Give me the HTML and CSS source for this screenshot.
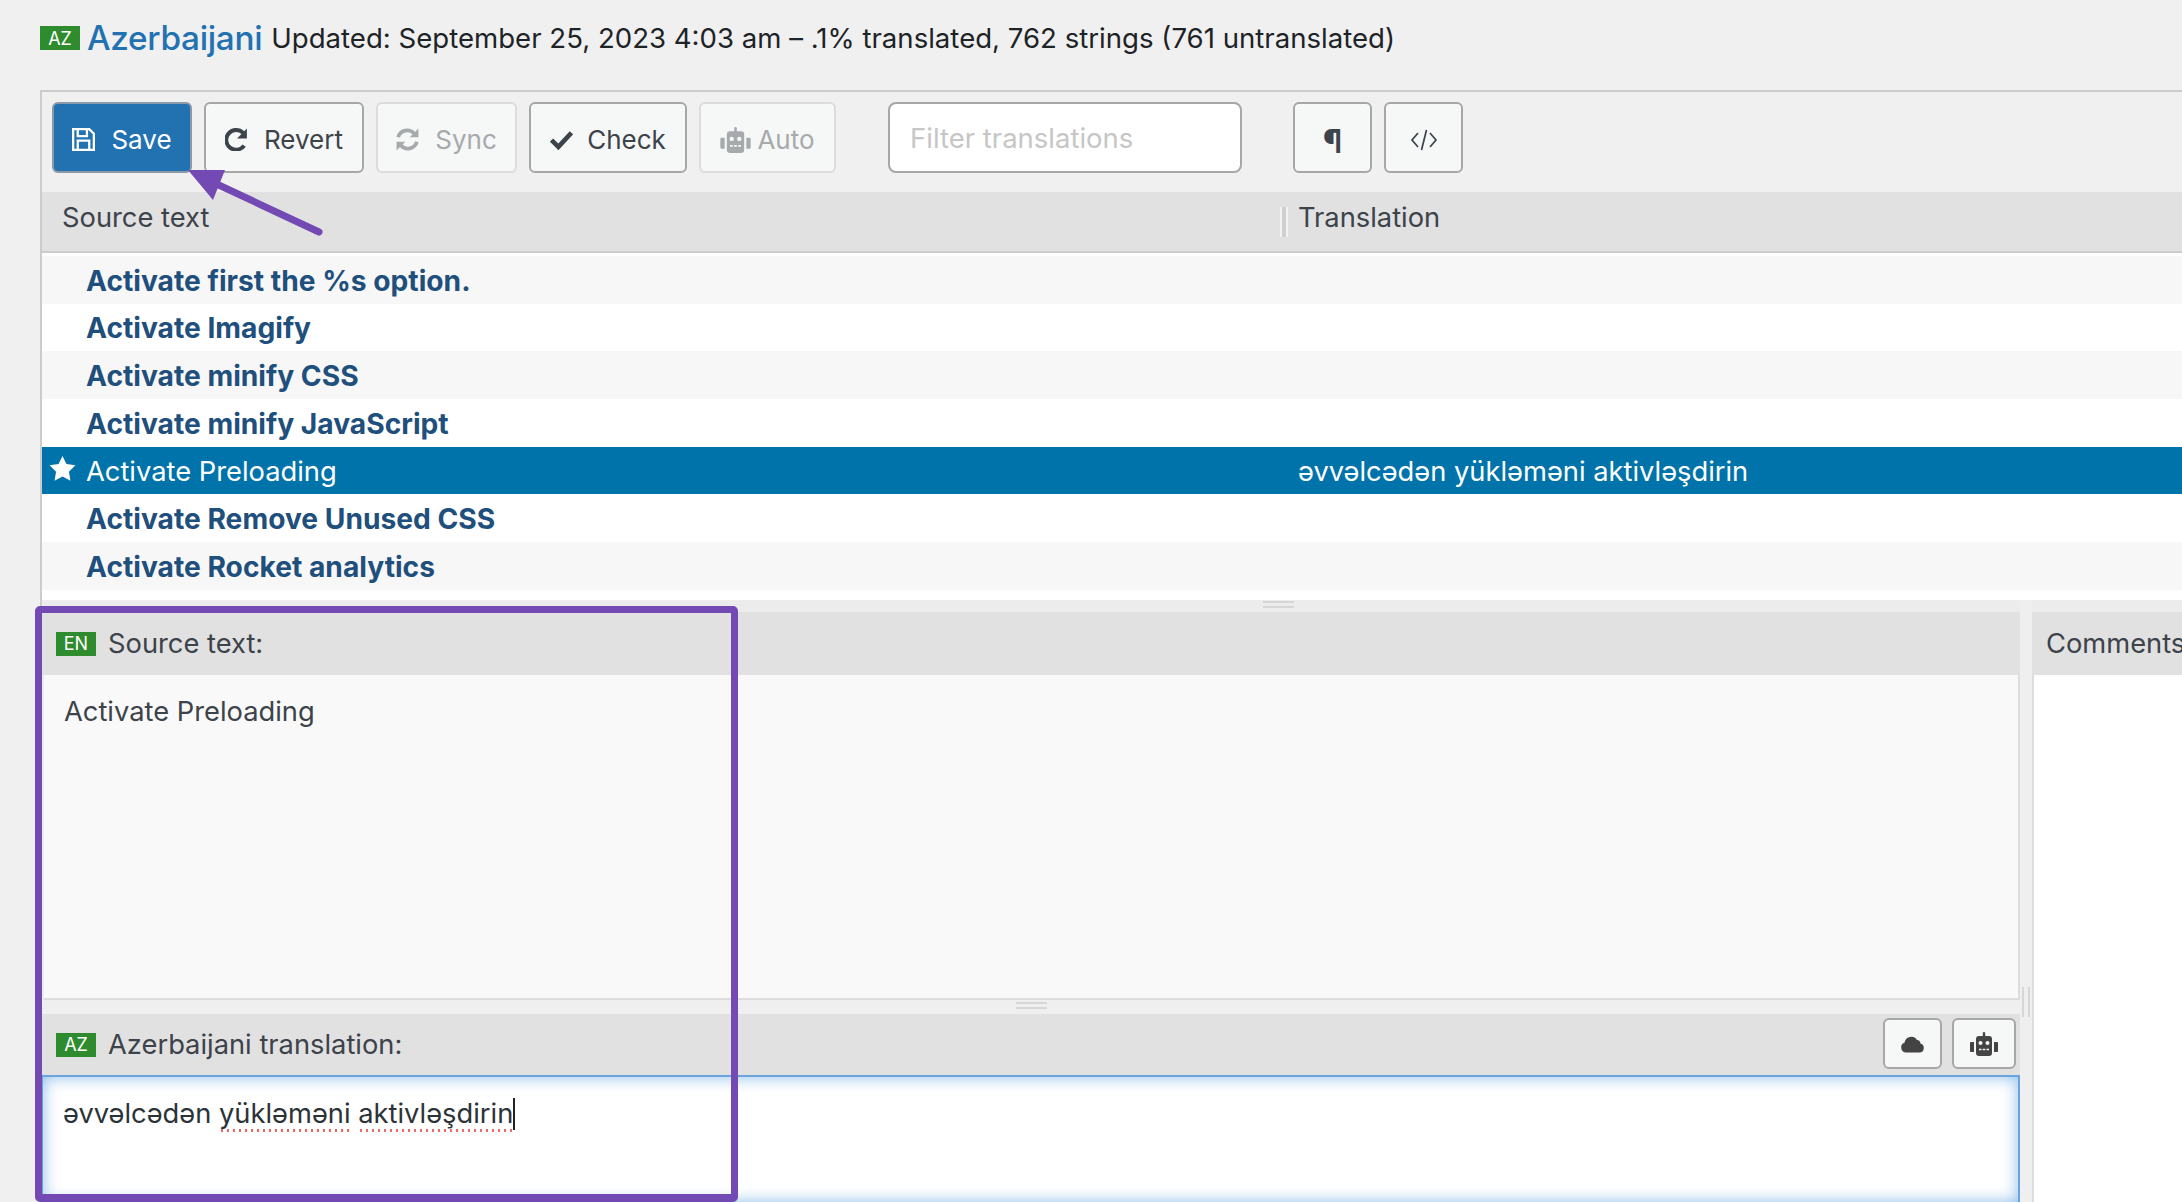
FILE: index.html
```html
<!DOCTYPE html>
<html lang="en">
<head>
<meta charset="utf-8">
<title>Azerbaijani translation</title>
<link rel="stylesheet" href="styles.css">
</head>
<body>
<div class="page">
  <header class="title">
    <span class="badge badge-title">AZ</span>
    <a class="lang">Azerbaijani</a>
    <span class="meta">Updated: September 25, 2023 4:03 am – .1% translated, 762 strings (761 untranslated)</span>
  </header>
  <section class="panel">
    <div class="toolbar">
      <button class="btn btn-primary btn-save">
        <svg class="ico" viewBox="2 2 20 20"><path d="M3 3h14l4 4v14H3z M7 3v6h8V3 M7 21v-8h10v8" fill="none" stroke="#fff" stroke-width="2"/></svg>Save
      </button>
      <button class="btn btn-revert">
        <svg class="ico" viewBox="2 1.500 20 21"><path d="M19 17.500A9 9 0 1 1 18 6" fill="none" stroke="#3c434a" stroke-width="3.600"/><path d="M21.500 2v9h-9z" fill="#3c434a"/></svg>Revert
      </button>
      <button class="btn btn-off btn-sync">
        <svg class="ico" viewBox="1.500 1.500 21 21"><path d="M3.500 10A8.500 8.500 0 0 1 18 6.500" fill="none" stroke="#a7aaad" stroke-width="3.400"/><path d="M22 2v8h-8z" fill="#a7aaad"/><path d="M20.500 14A8.500 8.500 0 0 1 6 17.500" fill="none" stroke="#a7aaad" stroke-width="3.400"/><path d="M2 22v-8h8z" fill="#a7aaad"/></svg>Sync
      </button>
      <button class="btn btn-check">
        <svg class="ico" viewBox="1 3 22 19"><path d="M2.500 13l6.500 6.500L21.500 6" fill="none" stroke="#3c434a" stroke-width="4.400"/></svg>Check
      </button>
      <button class="btn btn-off btn-auto">
        <svg class="ico-robot" viewBox="0 0 28 24"><path d="M14 0a1.200 1.200 0 0 1 1.200 1.200V4H19a3 3 0 0 1 3 3v14a3 3 0 0 1-3 3H9a3 3 0 0 1-3-3V7a3 3 0 0 1 3-3h3.800V1.200A1.200 1.200 0 0 1 14 0zM1 10h3v10H1a1 1 0 0 1-1-1v-8a1 1 0 0 1 1-1zm23 0h3a1 1 0 0 1 1 1v8a1 1 0 0 1-1 1h-3z" fill="#a7aaad"/><circle cx="10.500" cy="11" r="2" fill="#f6f7f7"/><circle cx="17.500" cy="11" r="2" fill="#f6f7f7"/><path d="M9 17.500h10" stroke="#f6f7f7" stroke-width="1.600" stroke-dasharray="2.500 1.250"/></svg>Auto
      </button>
      <div class="filter">Filter translations</div>
      <button class="btn btn-icon btn-para">¶</button>
      <button class="btn btn-icon btn-code">
        <svg class="ico-code" viewBox="0 0 28 24"><path d="M8 5L2 12l6 7M20 5l6 7-6 7M16.500 2l-5 20" fill="none" stroke="#3c434a" stroke-width="1.700"/></svg>
      </button>
    </div>
    <div class="thead">
      <div class="th th-source">Source text</div>
      <div class="th th-target"><span class="grip-v"></span>Translation</div>
    </div>
    <div class="list">
      <div class="row alt"><span class="cell-src">Activate first the %s option.</span></div>
      <div class="row"><span class="cell-src">Activate Imagify</span></div>
      <div class="row alt"><span class="cell-src">Activate minify CSS</span></div>
      <div class="row"><span class="cell-src">Activate minify JavaScript</span></div>
      <div class="row selected">
        <svg class="star" viewBox="0 0 24 24"><path d="M12 .8l3.500 7.300 8 1.100-5.800 5.600 1.400 8L12 19l-7.100 3.800 1.400-8L.500 9.200l8-1.100z" fill="#fff"/></svg>
        <span class="cell-src">Activate Preloading</span>
        <span class="cell-tgt">əvvəlcədən yükləməni aktivləşdirin</span>
      </div>
      <div class="row"><span class="cell-src">Activate Remove Unused CSS</span></div>
      <div class="row alt"><span class="cell-src">Activate Rocket analytics</span></div>
      <span class="grip-h grip-list"></span>
    </div>
    <div class="editor">
      <div class="editor-main">
        <div class="pane-head">
          <span class="badge">EN</span>Source text:
        </div>
        <div class="source-body">Activate Preloading</div>
        <div class="split-h"><span class="grip-h"></span></div>
        <div class="pane-head pane-head-target">
          <span class="badge">AZ</span>Azerbaijani translation:
          <div class="pane-actions">
            <button class="btn btn-small btn-cloud">
              <svg class="ico-cloud" viewBox="0 0 24 18"><path d="M5.500 17.500A5 5 0 0 1 4 7.800 6.800 6.800 0 0 1 16.500 5a4 4 0 0 1 3.500 3.500 4.600 4.600 0 0 1-1 9z" fill="#444"/></svg>
            </button>
            <button class="btn btn-small btn-robot">
              <svg class="ico-bot" viewBox="0 0 28 24"><path d="M14 0a1.200 1.200 0 0 1 1.200 1.200V4H19a3 3 0 0 1 3 3v14a3 3 0 0 1-3 3H9a3 3 0 0 1-3-3V7a3 3 0 0 1 3-3h3.800V1.200A1.200 1.200 0 0 1 14 0zM1 10h3v10H1a1 1 0 0 1-1-1v-8a1 1 0 0 1 1-1zm23 0h3a1 1 0 0 1 1 1v8a1 1 0 0 1-1 1h-3z" fill="#444"/><circle cx="10.500" cy="11" r="2" fill="#f6f7f7"/><circle cx="17.500" cy="11" r="2" fill="#f6f7f7"/><path d="M9 17.500h10" stroke="#f6f7f7" stroke-width="1.600" stroke-dasharray="2.500 1.250"/></svg>
            </button>
          </div>
        </div>
        <div class="target-body">əvvəlcədən <span class="misspelt">yükləməni</span> <span class="misspelt">aktivləşdirin</span><span class="caret"></span></div>
      </div>
      <div class="split-v"><span class="grip-vt"></span></div>
      <div class="editor-side">
        <div class="pane-head pane-head-side">Comments</div>
        <div class="side-body"></div>
      </div>
    </div>
  </section>
  <div class="frame"></div>
  <svg class="arrow" viewBox="0 0 160 80"><path d="M20 10L131 62" stroke="#7349b3" stroke-width="7" stroke-linecap="round"/><path d="M0 0h37L25 30z" fill="#7349b3"/></svg>
</div>
</body>
</html>
```
FILE: styles.css
```css
* { box-sizing: border-box; }
html, body { margin: 0; height: 100%; }
body {
  background: #f0f0f0;
  color: #3c434a;
  font-family: Inter, "Noto Sans", "Liberation Sans", sans-serif;
  font-size: 27.3px;
  overflow: hidden;
}
.page { position: relative; height: 1202px; padding-left: 40px; overflow: hidden; }
.title { height: 76px; margin-bottom: 14px; display: flex; align-items: center; }
.badge {
  display: inline-flex; align-items: center; justify-content: center;
  width: 40px; height: 24px; background: #2e8b2e; color: #fff;
  font-size: 18px; margin-right: 13px; flex: none;
}
.badge-title { margin-right: 7px; }
.lang { color: #2271b1; font-size: 33.3px; font-weight: 500; margin-right: 9px; letter-spacing: -.3px; }
.meta { color: #1d2327; font-size: 27.6px; }

.panel { border-top: 2px solid #ccc; border-left: 2px solid #ccc; }
.toolbar { height: 100px; padding: 10px; display: flex; align-items: flex-start; gap: 12px; }
.btn {
  height: 71px; padding: 4px 0 0; border: 2px solid #a7a7a7; border-radius: 6px;
  background: #f6f7f7; color: #3c434a; font: inherit; font-size: 26px;
  display: inline-flex; align-items: center; justify-content: center; gap: 16px; flex: none;
}
.btn-primary { background: #2271b1; color: #fff; border-color: #8a9aa8; }
.btn-off { border-color: #dcdcde; color: #a7aaad; }
.btn-save { width: 140px; }
.btn-revert { width: 160px; }
.btn-sync { width: 141px; }
.btn-check { width: 158px; gap: 14px; }
.btn-auto { width: 137px; gap: 6px; }
.ico { width: 23px; height: 23px; flex: none; }
.ico-robot { width: 31px; height: 26px; flex: none; }
.filter {
  width: 354px; height: 71px; margin-left: 40px; padding: 0 20px;
  background: #fff; border: 2px solid #a7a7a7; border-radius: 8px;
  color: #c6c6c6; font-size: 27.5px; display: flex; align-items: center;
}
.btn-icon { width: 79px; }
.btn-para { margin-left: 39px; padding-top: 7px; font-size: 32px; font-weight: 700; }
.ico-code { width: 28px; height: 24px; }

.thead { height: 61px; background: #e1e1e1; border-bottom: 2px solid #ccc; display: flex; }
.th { padding: 0 0 8px 20px; display: flex; align-items: center; position: relative; }
.th-source { width: 1238px; }
.th-target { padding-left: 18px; flex: 1; }
.grip-v {
  position: absolute; left: 0; top: 15px; width: 8px; height: 30px;
  border-left: 2px solid #f2f2f2; border-right: 2px solid #f2f2f2; background: #cfcfcf;
}
.list { height: 347px; padding-top: 3px; background: #fff; position: relative; }
.row { height: 47.67px; padding-top: 2px; display: flex; align-items: center; position: relative; background: #fff; }
.row.alt { background: #f7f7f7; }
.cell-src { margin-left: 44px; width: 1212px; flex: none; color: #1f4f7c; font-weight: 700; font-size: 28.2px; }
.row.selected { background: #0073aa; color: #fff; }
.selected .cell-src, .selected .cell-tgt { color: #fff; font-weight: 400; font-size: 27.3px; }
.star { position: absolute; left: 7px; top: 8px; width: 27px; height: 27px; }
.grip-h {
  display: block; width: 31px; height: 7px;
  border-top: 2px solid #d6d6d6; border-bottom: 2px solid #d6d6d6;
}
.grip-list { position: absolute; left: 1221px; bottom: -8px; }

.editor { height: 602px; background: #ececec; padding-top: 12px; display: flex; }
.editor-main { width: 1978px; flex: none; display: flex; flex-direction: column; }
.pane-head {
  height: 63px; background: #e1e1e1; display: flex; align-items: center;
  padding-left: 14px; position: relative; flex: none;
}
.pane-head .badge { margin-right: 12px; }
.source-body {
  height: 325px; margin-left: 2px; background: #f9f9f9; border-right: 2px solid #ddd;
  border-bottom: 2px solid #ddd; padding: 19px 20px; line-height: 36px; flex: none;
}
.split-h { height: 14px; background: #efefef; position: relative; flex: none; }
.split-h .grip-h { position: absolute; left: 974px; top: 2px; }
.pane-head-target { height: 61px; }
.pane-actions { position: absolute; right: 4px; top: 4px; display: flex; gap: 10px; }
.btn-small { height: 51px; padding: 0; }
.btn-cloud { width: 59px; }
.btn-robot { width: 64px; }
.ico-cloud { width: 25px; height: 18px; }
.ico-bot { width: 28px; height: 24px; }
.target-body {
  flex: 1; background: #fff; border: 2px solid #6ba3dc; border-bottom: 0; border-left-width: 1px;
  box-shadow: inset 0 0 16px rgba(90, 160, 225, .7);
  padding: 19px 20px; line-height: 36px; color: #2c3338;
}
.misspelt {
  padding-bottom: 2px;
  background-image: radial-gradient(circle, #ea6a6a 1.2px, transparent 1.5px);
  background-size: 6px 3px; background-repeat: repeat-x; background-position: 0 100%;
}
.caret { display: inline-block; width: 2px; height: 32px; background: #1d2327; vertical-align: -7px; }
.split-v { width: 12px; margin-top: -12px; background: #efefef; position: relative; flex: none; }
.grip-vt {
  position: absolute; left: 2px; top: 387px; width: 8px; height: 30px;
  border-left: 2px solid #d6d6d6; border-right: 2px solid #d6d6d6;
}
.editor-side { flex: 1; display: flex; flex-direction: column; }
.pane-head-side { padding-left: 14px; }
.side-body { flex: 1; border-left: 2px solid #ddd; background: #fff; }

.frame {
  position: absolute; left: 35px; top: 606px; width: 703px; height: 596px;
  border: 7px solid #7349b3; border-radius: 5px; border-bottom-width: 8px;
}
.arrow { position: absolute; left: 188px; top: 170px; width: 160px; height: 80px; }
```
